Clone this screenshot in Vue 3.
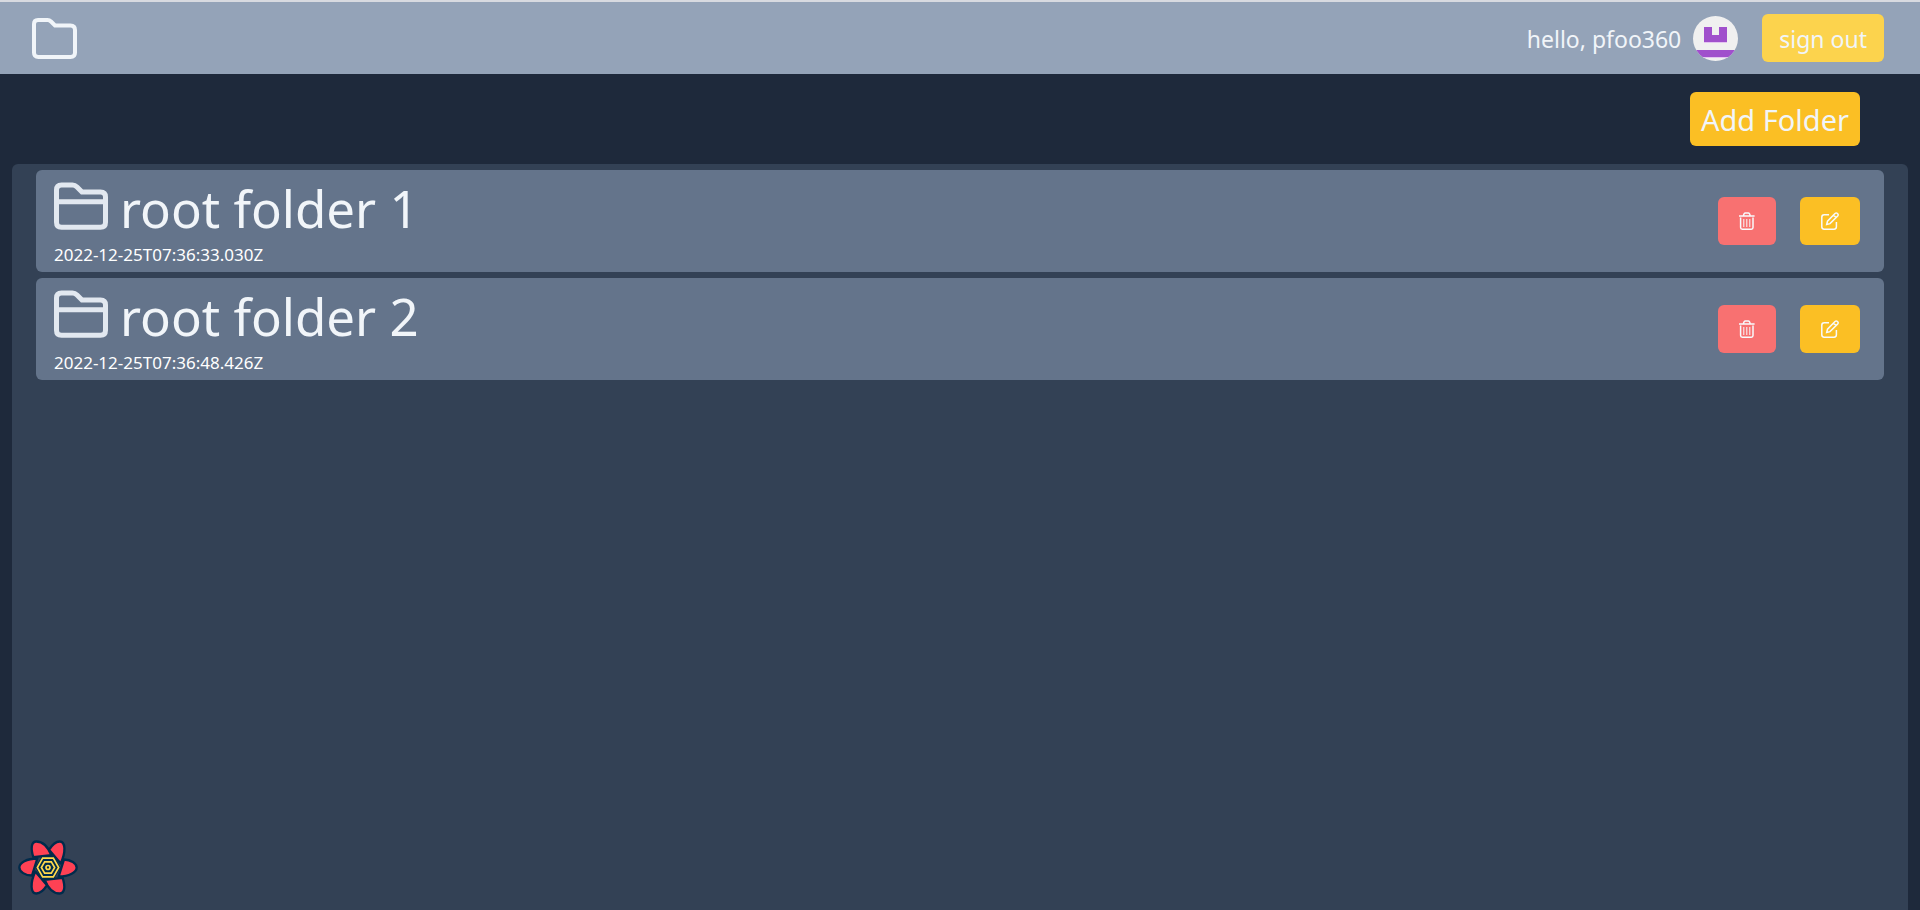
<script setup>
import { ref } from 'vue'

const user = ref('pfoo360')
const folders = ref([
  { id: 1, name: 'root folder 1', created: '2022-12-25T07:36:33.030Z' },
  { id: 2, name: 'root folder 2', created: '2022-12-25T07:36:48.426Z' },
])
</script>

<template>
  <div class="page">
    <header class="bar">
      <a class="home" href="#" aria-label="Home">
        <svg class="home-icon" viewBox="0 0 45 41" aria-hidden="true">
          <path d="M2 6Q2 2 6 2H15.500Q17.500 2 19 3.500L23 7.500H38.500Q43 7.500 43 12V34.500Q43 39 38.500 39H6.500Q2 39 2 34.500Z" />
        </svg>
      </a>
      <div class="account">
        <span class="hello">hello, {{ user }}</span>
        <svg class="avatar" viewBox="0 0 45 45" aria-hidden="true">
          <clipPath id="avatar-clip"><circle cx="22.500" cy="22.500" r="22.500" /></clipPath>
          <g clip-path="url(#avatar-clip)">
            <rect width="45" height="45" fill="#f0f0f0" />
            <path d="M11 26H34V27H11ZM0 41H45V42H0Z" fill="#e3c4f0" />
            <path d="M11 11H19V19H26V11H34V26H11ZM0 34H45V41H0Z" fill="#a050cc" />
          </g>
        </svg>
        <button class="btn sign-out" type="button">sign out</button>
      </div>
    </header>

    <div class="tools">
      <button class="btn add" type="button">Add Folder</button>
    </div>

    <main class="panel">
      <article v-for="folder in folders" :key="folder.id" class="row">
        <div class="info">
          <a class="title" href="#">
            <svg class="folder-icon" viewBox="0 0 54 48" aria-hidden="true">
              <path d="M2.500 8Q2.500 3 7.500 3H18.500Q21 3 23 5L28 10H46.500Q51.500 10 51.500 15V40.200Q51.500 45.200 46.500 45.200H7.500Q2.500 45.200 2.500 40.200ZM2.500 19.800H51.500" />
            </svg>
            <span class="name">{{ folder.name }}</span>
          </a>
          <time class="date" :datetime="folder.created">{{ folder.created }}</time>
        </div>
        <div class="actions">
          <button class="btn action delete" type="button" :aria-label="`Delete ${folder.name}`">
            <svg class="glyph" viewBox="0 0 18 18" aria-hidden="true">
              <path d="M2.600 5.500V15.500Q2.600 17.200 4.300 17.200H13.300Q15 17.200 15 15.500V5.500M1 4H16.600M5.500 3.500Q5.800 1 7.300.9H10.300Q11.800 1 12.100 3.500" />
              <path class="thin" d="M5.800 7V15M8.800 7V15M11.800 7V15" />
            </svg>
          </button>
          <button class="btn action edit" type="button" :aria-label="`Edit ${folder.name}`">
            <svg class="glyph" viewBox="0 0 18 18" aria-hidden="true">
              <path d="M8 2.800H3.200Q.8 2.800.8 5.200V14.800Q.8 17.200 3.200 17.200H13Q15.400 17.200 15.400 14.800V10" />
              <path d="M5.700 12.500L6.500 9.200L14 1.500Q15.200.4 16.500 1.500Q17.800 2.700 16.700 4L9 11.600ZM12.500 3L15.200 5.700" />
            </svg>
          </button>
        </div>
      </article>
    </main>

    <button class="devtools" type="button" aria-label="Open query devtools">
      <svg viewBox="54 62 180 164" aria-hidden="true">
        <g fill="#ff4154" stroke="#002b4b" stroke-width="7" stroke-linejoin="round">
          <path d="M112 117C80 117 58 130 58 144C58 157 76 168 96 168Z" />
          <path d="M176 171C208 171 230 158 230 144C230 131 212 121 192 120Z" />
          <path d="M154 107L100 113C92 88 93 66 109 66C126 66 143 80 154 107Z" />
          <path d="M134 181L188 175C196 200 195 222 179 222C162 222 145 208 134 181Z" />
          <path d="M182 132L147 91C157 75 168 66 179 66C197 66 198 98 182 132Z" />
          <path d="M106 156L141 197C131 213 120 222 109 222C91 222 90 190 106 156Z" />
        </g>
        <path d="M126 109H162L182 144L162 179H126L106 144Z" fill="#002b4b" />
        <g fill="none" stroke="#ffd94c" stroke-width="5">
          <path d="M128 116H160L176 144L160 172H128L112 144Z" />
          <path d="M134 127H154L164 144L154 161H134L124 144Z" />
          <circle cx="144" cy="144" r="6" />
        </g>
      </svg>
    </button>
  </div>
</template>

<style>
body {
  margin: 0;
  background: #1e293b;
}
</style>

<style scoped>
.page {
  display: flex;
  flex-direction: column;
  min-height: 100vh;
  box-sizing: border-box;
  border-top: 2px solid #d8dae0;
  background: #1e293b;
  color: #f1f5f9;
  font-family: "Noto Sans", "Open Sans", sans-serif;
}
.bar {
  display: flex;
  align-items: center;
  justify-content: space-between;
  height: 72px;
  padding: 0 36px 0 32px;
  background: #94a3b8;
}
.home,
.home-icon,
.avatar,
.glyph,
.folder-icon {
  display: block;
}
.home-icon {
  width: 45px;
  height: 41px;
  fill: none;
  stroke: #f1f5f9;
  stroke-width: 4;
}
.account {
  display: flex;
  align-items: center;
}
.hello {
  padding-top: 2px;
  font-size: 23px;
  line-height: 36px;
}
.avatar {
  width: 45px;
  height: 45px;
  margin: 0 24px 0 12px;
}
.btn {
  display: flex;
  align-items: center;
  justify-content: center;
  border: 0;
  border-radius: 6px;
  padding: 0;
  color: #f1f5f9;
  font-family: inherit;
  cursor: pointer;
}
.sign-out {
  height: 48px;
  padding: 2px 17px 0;
  background: #fcd34d;
  font-size: 23px;
}
.tools {
  display: flex;
  justify-content: flex-end;
  padding: 18px 60px;
}
.add {
  height: 54px;
  padding: 0 11px;
  background: #fbbf24;
  font-size: 29px;
}
.panel {
  display: flex;
  flex: 1;
  flex-direction: column;
  gap: 6px;
  margin: 0 12px;
  padding: 6px 24px;
  border-radius: 6px 6px 0 0;
  background: #334155;
}
.row {
  display: flex;
  align-items: center;
  justify-content: space-between;
  height: 102px;
  padding: 0 24px 0 18px;
  border-radius: 6px;
  background: #64748b;
}
.info {
  display: flex;
  flex-direction: column;
  gap: 2px;
  padding-top: 2px;
}
.title {
  display: flex;
  align-items: flex-start;
  gap: 12px;
  color: inherit;
  text-decoration: none;
}
.folder-icon {
  width: 54px;
  height: 48px;
  margin-top: 6px;
  fill: none;
  stroke: #e2e8f0;
  stroke-width: 5;
}
.name {
  font-size: 51px;
  line-height: 64px;
}
.date {
  color: #fff;
  font-size: 17px;
  line-height: 26px;
}
.actions {
  display: flex;
  gap: 24px;
}
.action {
  height: 48px;
}
.delete {
  width: 58px;
  background: #f87171;
}
.edit {
  width: 60px;
  background: #fbbf24;
}
.glyph {
  width: 18px;
  height: 18px;
  fill: none;
  stroke: #f8fafc;
  stroke-width: 1.500;
}
.thin {
  stroke-width: 1;
}
.devtools {
  position: fixed;
  bottom: 15px;
  left: 18px;
  padding: 0;
  border: 0;
  background: none;
  cursor: pointer;
}
.devtools svg {
  display: block;
  width: 60px;
  height: 55px;
}
</style>
